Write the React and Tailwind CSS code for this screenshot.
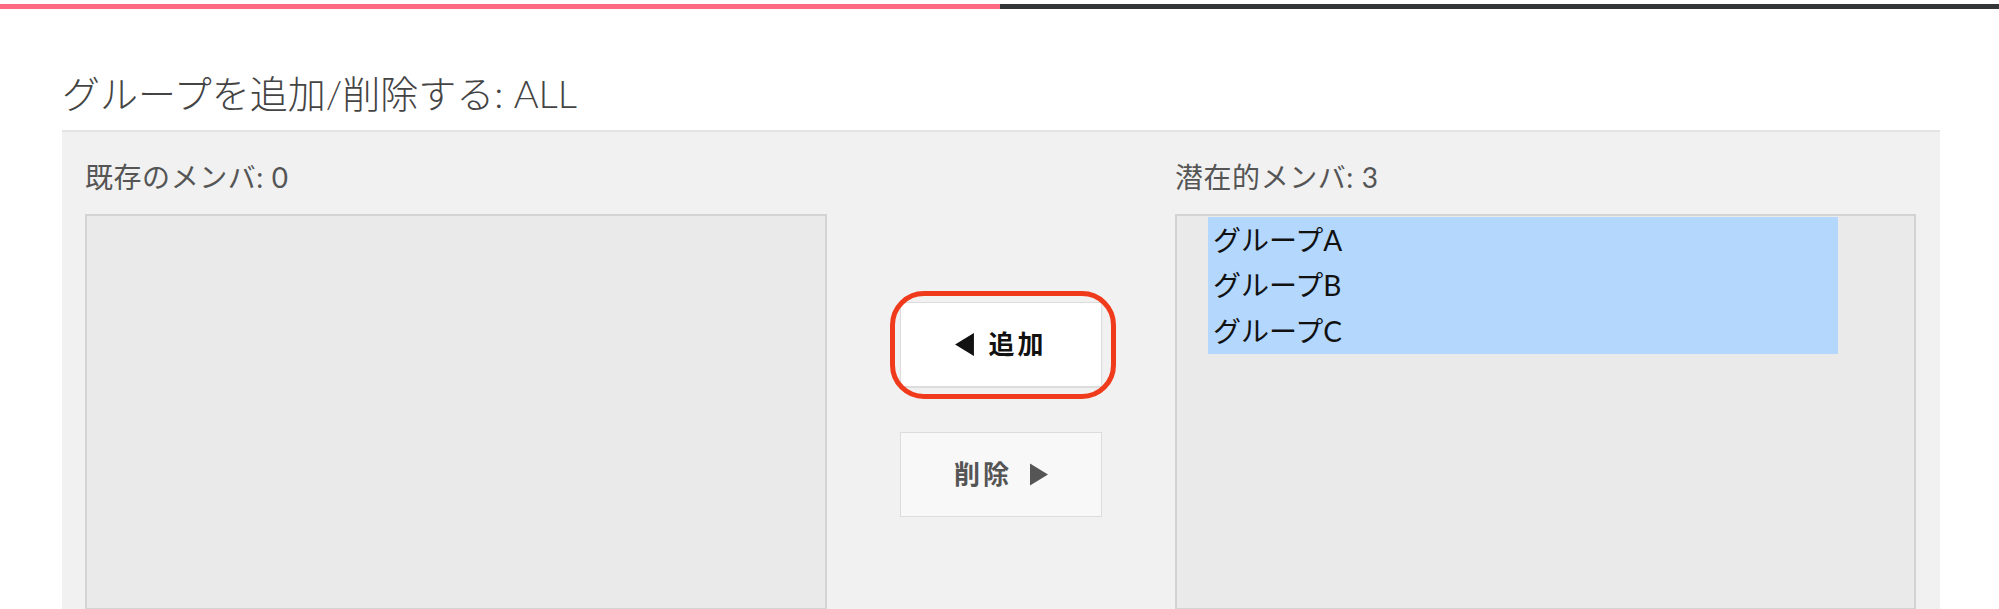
import React from 'react';

const jp = { fontFamily: 'Lato, "Noto Sans CJK JP", sans-serif' };

function LeftTri({ className }) {
  return (
    <svg viewBox="0 0 18 22" className={className}>
      <path d="M18 0 L0 11 L18 22 Z" fill="currentColor" />
    </svg>
  );
}

function RightTri({ className }) {
  return (
    <svg viewBox="0 0 18 22" className={className}>
      <path d="M0 0 L18 11 L0 22 Z" fill="currentColor" />
    </svg>
  );
}

export default function App() {
  const groups = ['グループA', 'グループB', 'グループC'];

  return (
    <div className="w-[1999px] h-[609px] overflow-hidden bg-white" style={jp}>
      {/* progress bar */}
      <div className="mt-[4px] h-[5px] flex">
        <div className="w-[1000px] bg-[#ff6b81]" />
        <div className="flex-1 bg-[#333538]" />
      </div>

      <h1 className="ml-[62px] mt-[65px] mb-[17px] text-[38px] leading-[39px] font-light text-[#444]">
        グループを追加/削除する: ALL
      </h1>

      <div className="ml-[62px] w-[1878px] h-[480px] bg-[#f1f1f1] border-t-2 border-[#e4e4e4] pl-[23px] pr-[24px] pt-[31px] flex">
        {/* existing members */}
        <div className="w-[742px] flex flex-col">
          <div className="text-[28px] leading-[28px] tracking-[0.02em] text-[#555] mb-[23px]">既存のメンバ: 0</div>
          <div className="h-[400px] bg-[#eaeaea] border-2 border-[#d3d3d3]" />
        </div>

        {/* buttons */}
        <div className="w-[348px] flex flex-col items-center pt-[139px]">
          <div className="relative">
            <button className="w-[202px] h-[85px] bg-white border border-[#dcdcdc] shadow-[0_1px_1px_rgba(0,0,0,0.08)] flex items-center justify-center gap-[14px] text-[#111] font-bold text-[26px] tracking-[0.12em]">
              <LeftTri className="w-[19px] h-[23px]" />
              <span>追加</span>
            </button>
            <span className="absolute -left-[10px] -right-[14px] -top-[11px] -bottom-[12px] rounded-[34px] border-[5px] border-[#f03a1c] pointer-events-none" />
          </div>
          <button className="mt-[45px] w-[202px] h-[85px] bg-[#f8f8f8] border border-[#dcdcdc] flex items-center justify-center gap-[18px] text-[#555] font-bold text-[26px] tracking-[0.12em]">
            <span>削除</span>
            <RightTri className="w-[18px] h-[23px]" />
          </button>
        </div>

        {/* potential members */}
        <div className="w-[741px] flex flex-col">
          <div className="text-[28px] leading-[28px] tracking-[0.02em] text-[#555] mb-[23px]">潜在的メンバ: 3</div>
          <div className="h-[400px] bg-[#eaeaea] border-2 border-[#d3d3d3] pl-[31px] pt-[1px]">
            <div className="w-[630px] bg-[#b3d7fd]">
              {groups.map((g) => (
                <div key={g} className="h-[45.5px] pl-[5px] flex items-center text-[28px] text-[#111]">
                  {g}
                </div>
              ))}
            </div>
          </div>
        </div>
      </div>
    </div>
  );
}
